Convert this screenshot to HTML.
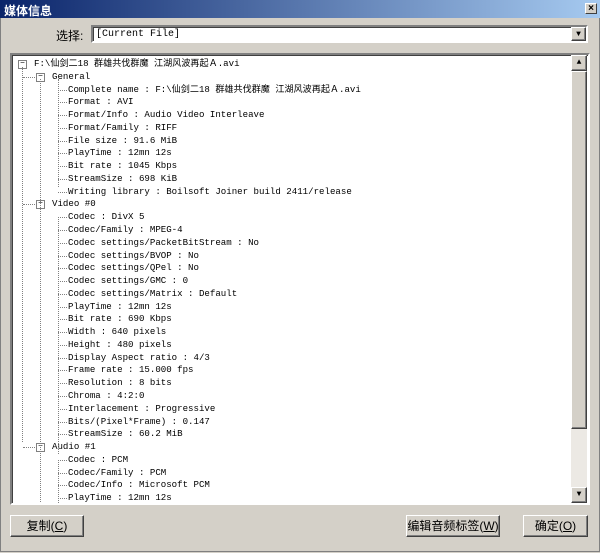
<html><head><style>
body{margin:0;width:600px;height:553px;background:#d4d0c8;position:relative;overflow:hidden;font-family:"Liberation Mono","Noto Sans CJK SC",monospace}
.tb{position:absolute;left:0;top:0;width:600px;height:18px;background:linear-gradient(90deg,#0a246a,#a6caf0)}
.tb span{position:absolute;left:4px;top:2px;color:#fff;font:bold 12px "Liberation Sans","Noto Sans CJK SC",sans-serif}
.x{position:absolute;left:585px;top:3px;width:12px;height:11px;background:#d4d0c8;border:1px solid;border-color:#fff #404040 #404040 #fff;font:bold 10px sans-serif;text-align:center;line-height:10px;box-sizing:border-box}
.outer{position:absolute;left:0;top:18px;width:598px;height:533px;border:1px solid #808080;border-top:none}
.lbl{position:absolute;left:56px;top:27px;font:12px "Liberation Sans","Noto Sans CJK SC",sans-serif}
.combo{position:absolute;left:91px;top:25px;width:497px;height:18px;background:#fff;border:2px solid;border-color:#808080 #fff #fff #808080;box-sizing:border-box;box-shadow:inset 1px 1px #404040}
.combo span{position:absolute;left:3px;top:2px;font-size:10px}
.btn3{position:absolute;background:#d4d0c8;border:1px solid;border-color:#fff #404040 #404040 #fff;box-sizing:border-box;box-shadow:inset -1px -1px #808080}
.tree{position:absolute;left:10px;top:53px;width:580px;height:452px;background:#fff;border:2px solid;border-color:#808080 #fff #fff #808080;box-sizing:border-box;box-shadow:inset 1px 1px #404040;overflow:hidden}
.r{position:absolute;font-size:9.1px;white-space:nowrap;height:12px;line-height:12px}
.bx{position:absolute;width:7px;height:7px;border:1px solid #808080;background:#fff;font-size:8px;line-height:6px;text-align:center}
.vl{position:absolute;border-left:1px dotted #808080;width:0}
.hl{position:absolute;border-top:1px dotted #808080;height:0;width:6px}
.sb{position:absolute;left:571px;top:55px;width:16px;height:448px;background:#ece9e4}
.btn{position:absolute;top:515px;height:22px;background:#d4d0c8;border:1px solid;border-color:#fff #404040 #404040 #fff;box-sizing:border-box;box-shadow:inset -1px -1px #808080;font:12px "Liberation Sans","Noto Sans CJK SC",sans-serif;text-align:center;line-height:20px}
</style></head><body>
<div class="tb"><span>媒体信息</span><div class="x">×</div></div>
<div class="outer"></div>
<div class="lbl">选择:</div>
<div class="combo"><span>[Current File]</span>
<div class="btn3" style="right:0;top:0;width:15px;height:14px;font-size:8px;text-align:center;line-height:13px">▼</div></div>
<div class="tree" id="t"></div>
<div class="sb">
<div class="btn3" style="left:0;top:0;width:16px;height:16px;font-size:8px;text-align:center;line-height:14px">▲</div>
<div class="btn3" style="left:0;top:16px;width:16px;height:358px"></div>
<div class="btn3" style="left:0;top:432px;width:16px;height:16px;font-size:8px;text-align:center;line-height:14px">▼</div>
</div>
<div class="btn" style="left:10px;width:74px">复制(<u>C</u>)</div>
<div class="btn" style="left:406px;width:94px">编辑音频标签(<u>W</u>)</div>
<div class="btn" style="left:523px;width:65px">确定(<u>O</u>)</div>
<script>
var rows=[[0,"F:\\仙剑二18 群雄共伐群魔 江湖风波再起Ａ.avi",1],[1,"General",1],[2,"Complete name : F:\\仙剑二18 群雄共伐群魔 江湖风波再起Ａ.avi"],[2,"Format : AVI"],[2,"Format/Info : Audio Video Interleave"],[2,"Format/Family : RIFF"],[2,"File size : 91.6 MiB"],[2,"PlayTime : 12mn 12s"],[2,"Bit rate : 1045 Kbps"],[2,"StreamSize : 698 KiB"],[2,"Writing library : Boilsoft Joiner build 2411/release"],[1,"Video #0",1],[2,"Codec : DivX 5"],[2,"Codec/Family : MPEG-4"],[2,"Codec settings/PacketBitStream : No"],[2,"Codec settings/BVOP : No"],[2,"Codec settings/QPel : No"],[2,"Codec settings/GMC : 0"],[2,"Codec settings/Matrix : Default"],[2,"PlayTime : 12mn 12s"],[2,"Bit rate : 690 Kbps"],[2,"Width : 640 pixels"],[2,"Height : 480 pixels"],[2,"Display Aspect ratio : 4/3"],[2,"Frame rate : 15.000 fps"],[2,"Resolution : 8 bits"],[2,"Chroma : 4:2:0"],[2,"Interlacement : Progressive"],[2,"Bits/(Pixel*Frame) : 0.147"],[2,"StreamSize : 60.2 MiB"],[1,"Audio #1",1],[2,"Codec : PCM"],[2,"Codec/Family : PCM"],[2,"Codec/Info : Microsoft PCM"],[2,"PlayTime : 12mn 12s"]];
var h="",tx=[22,40,56],bxx=[6,24,42];
rows.forEach(function(r,i){var y=3+i*12.77;var l=r[0];
h+='<div class="r" style="left:'+tx[l]+'px;top:'+y+'px">'+r[1]+'</div>';
if(r[2])h+='<div class="bx" style="left:'+bxx[l]+'px;top:'+(y+2)+'px">−</div>';
else h+='<div class="hl" style="left:'+(bxx[l]+4)+'px;top:'+(y+6)+'px;width:9px"></div>';
if(l==1)h+='<div class="hl" style="left:11px;top:'+(y+6)+'px;width:12px"></div>';});
h+='<div class="vl" style="left:10px;top:12px;height:375px"></div>';
h+='<div class="vl" style="left:28px;top:24px;height:445px"></div>';
h+='<div class="vl" style="left:46px;top:24px;height:108px"></div>';
h+='<div class="vl" style="left:46px;top:164px;height:235px"></div>';
h+='<div class="vl" style="left:46px;top:407px;height:45px"></div>';
document.getElementById("t").innerHTML=h;
</script>
</body></html>
